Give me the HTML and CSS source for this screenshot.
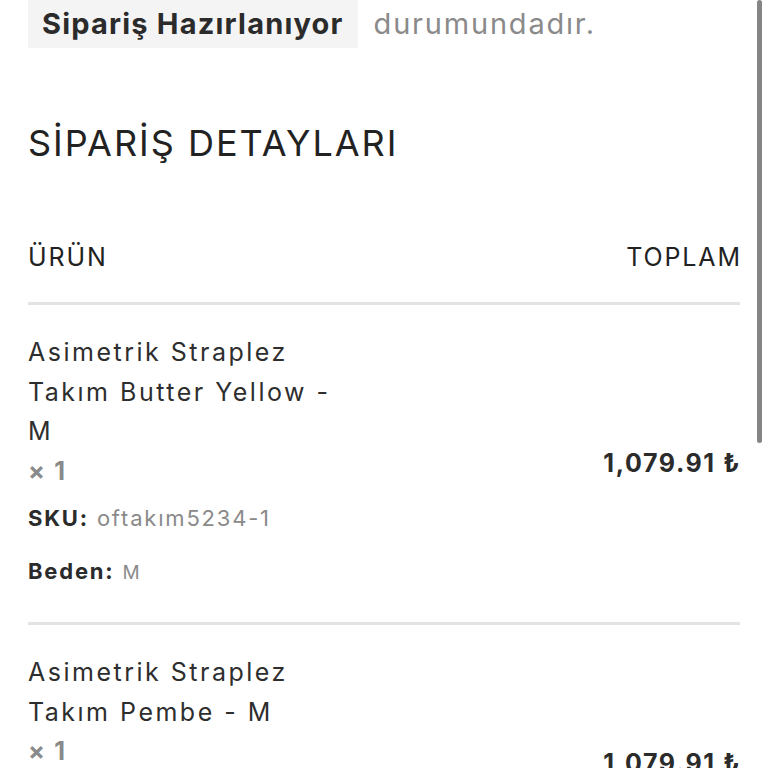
FILE: index.html
```html
<!DOCTYPE html>
<html lang="tr">
<head>
<meta charset="utf-8">
<link rel="stylesheet" href="styles.css">
</head>
<body>
<div class="page">
  <p class="status"><mark class="status-mark">Sipariş Hazırlanıyor</mark> durumundadır.</p>
  <h2 class="title">SİPARİŞ DETAYLARI</h2>
  <div class="order-table">
    <div class="row head">
      <div class="col-name">ÜRÜN</div>
      <div class="col-total">TOPLAM</div>
    </div>
    <div class="row item">
      <div class="col-name">
        <div class="product">Asimetrik Straplez Takım Butter Yellow - M <strong class="qty">×&nbsp;1</strong></div>
        <div class="meta"><strong>SKU:</strong> oftakım5234-1</div>
        <div class="meta"><strong>Beden:</strong> <span class="meta-val">M</span></div>
      </div>
      <div class="col-total price">1,079.91 ₺</div>
    </div>
    <div class="row item">
      <div class="col-name">
        <div class="product">Asimetrik Straplez Takım Pembe - M <strong class="qty">×&nbsp;1</strong></div>
        <div class="meta"><strong>SKU:</strong> oftakım5235-1</div>
        <div class="meta"><strong>Beden:</strong> <span class="meta-val">M</span></div>
      </div>
      <div class="col-total price">1,079.91 ₺</div>
    </div>
  </div>
</div>
<div class="scrollbar"></div>
</body>
</html>
```
FILE: styles.css
```css
html, body {
  margin: 0;
  padding: 0;
  background: #fff;
  overflow: hidden;
  height: 768px;
}
body {
  font-family: "Inter", "DejaVu Sans", sans-serif;
  color: #2b2b2b;
}
.page {
  padding: 0 28px;
}
.status {
  margin: -2px 0 0;
  font-size: 29px;
  line-height: 52px;
  color: #8a8a8a;
  letter-spacing: 1.8px;
}
.status-mark {
  background: #f4f4f4;
  color: #2b2b2b;
  font-weight: 700;
  padding: 8px 14px 7px;
  margin-right: 6px;
  letter-spacing: 1.2px;
}
.title {
  margin: 71px 0 0;
  font-size: 36px;
  line-height: 44px;
  font-weight: 400;
  color: #222;
  letter-spacing: 2px;
}
.order-table {
  margin-top: 75px;
}
.row {
  display: flex;
  justify-content: space-between;
  align-items: center;
}
.head {
  font-size: 25px;
  line-height: 34px;
  padding-bottom: 28px;
  border-bottom: 3px solid #e3e3e3;
  color: #222;
  letter-spacing: 1.9px;
}
.col-name {
  width: 44%;
}
.col-total {
  text-align: right;
}
.head .col-total {
  margin-right: -2px;
}
.item {
  padding: 28px 0 30px;
  border-bottom: 3px solid #e3e3e3;
}
.product {
  font-size: 25px;
  line-height: 39.5px;
  color: #2e2e2e;
  letter-spacing: 2.5px;
}
.qty {
  display: block;
  color: #8a8a8a;
  font-weight: 700;
  letter-spacing: 1.7px;
}
.meta {
  margin-top: 8px;
  font-size: 22px;
  line-height: 38px;
  color: #8a8a8a;
  letter-spacing: 1.8px;
}
.meta + .meta {
  margin-top: 15px;
}
.meta strong {
  color: #2b2b2b;
}
.meta-val {
  font-size: 19px;
}
.price {
  font-size: 25px;
  font-weight: 700;
  color: #2b2b2b;
  letter-spacing: 1.6px;
  margin-right: -1px;
}
.scrollbar {
  position: absolute;
  top: 0;
  right: 6px;
  width: 5px;
  height: 443px;
  border-radius: 3px;
  background: #858585;
}
```
